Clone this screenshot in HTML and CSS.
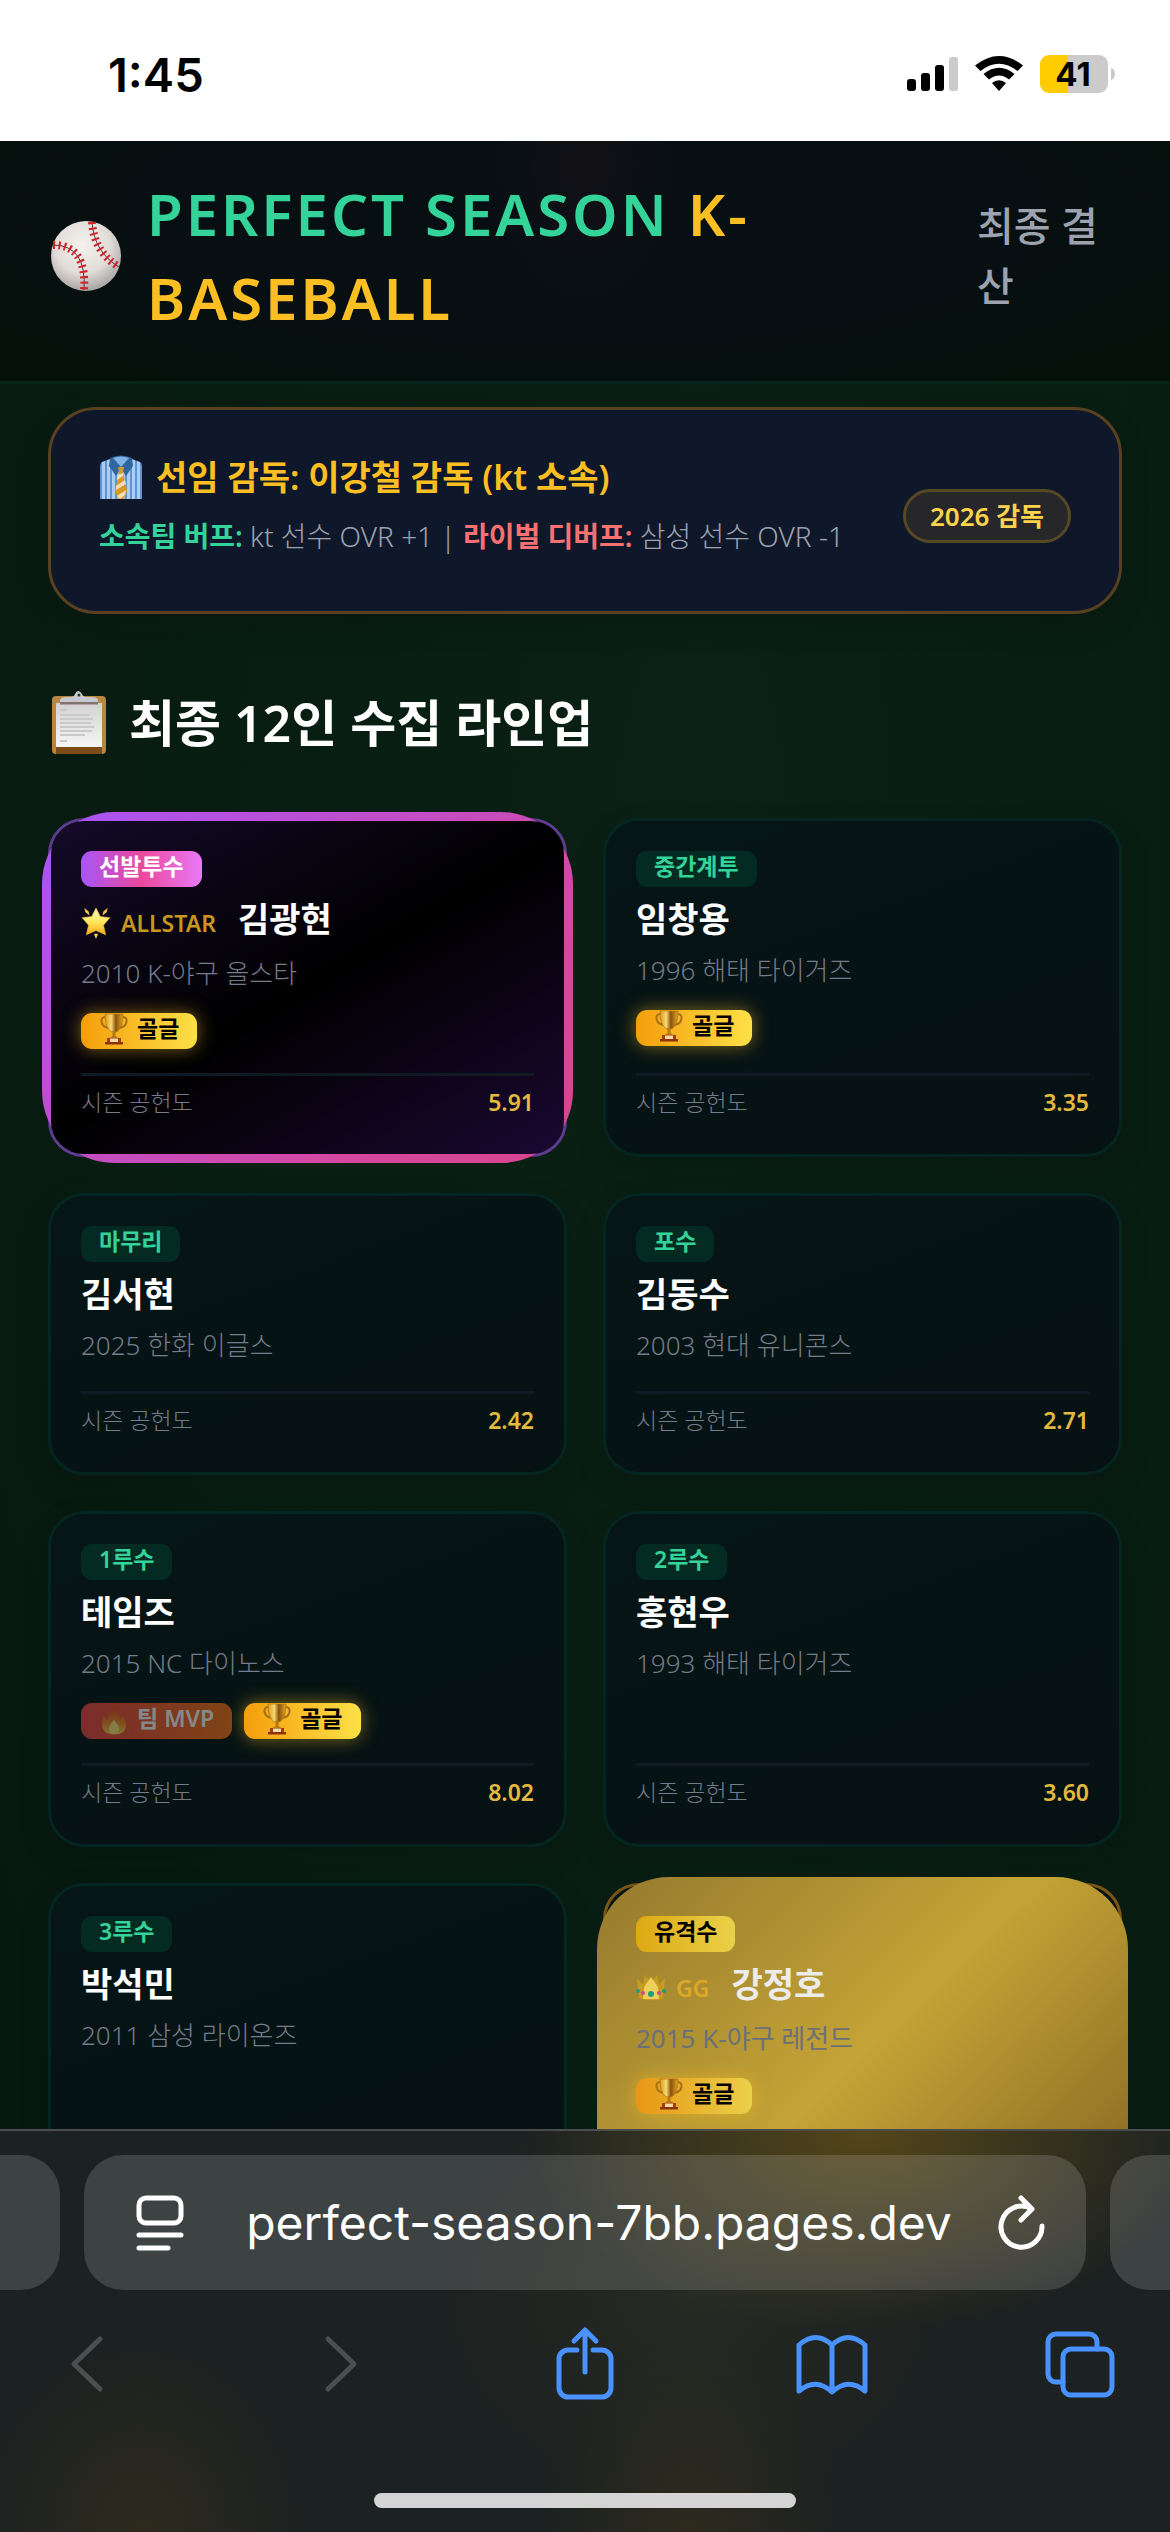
FILE: index.html
```html
<!DOCTYPE html>
<html lang="ko">
<head>
<meta charset="utf-8">
<meta name="viewport" content="width=device-width, initial-scale=1">
<title>PERFECT SEASON K-BASEBALL</title>
<link rel="stylesheet" href="styles.css">
</head>
<body>
<svg class="defs" aria-hidden="true">
  <defs>
    <linearGradient id="gold" x1="0" x2="1" y1="0" y2="0">
      <stop offset="0" stop-color="#d99a1c"/><stop offset=".35" stop-color="#f7d774"/><stop offset=".6" stop-color="#8a5208"/><stop offset="1" stop-color="#e0a62a"/>
    </linearGradient>
    <radialGradient id="ball" cx=".45" cy=".35" r=".65">
      <stop offset="0" stop-color="#f4f2ee"/><stop offset=".6" stop-color="#e2ddd8"/><stop offset="1" stop-color="#a9a6a6"/>
    </radialGradient>
    <linearGradient id="star" x1="0" x2="0" y1="0" y2="1">
      <stop offset="0" stop-color="#fff6c8"/><stop offset=".5" stop-color="#ffe95c"/><stop offset="1" stop-color="#f5a916"/>
    </linearGradient>
    <linearGradient id="fire" x1="0" x2="0" y1="0" y2="1">
      <stop offset="0" stop-color="#f0442a"/><stop offset=".6" stop-color="#fb8b24"/><stop offset="1" stop-color="#ffd84a"/>
    </linearGradient>
    <linearGradient id="paper" x1="0" x2="0" y1="0" y2="1">
      <stop offset="0" stop-color="#d2d2d2"/><stop offset="1" stop-color="#f6f6f6"/>
    </linearGradient>
    <pattern id="stripe" width="5" height="10" patternUnits="userSpaceOnUse">
      <rect width="5" height="10" fill="#a9cdf3"/><rect width="2" height="10" fill="#5f93d2"/>
    </pattern>
    <symbol id="trophy" viewBox="0 0 30 32">
      <path d="M7 4C0 3 1 14 10 15M23 4c7-1 6 10-3 11" fill="none" stroke="#a8700f" stroke-width="2"/>
      <path d="M6 1h18c0 9-2 16-7 18h-4C8 17 6 10 6 1z" fill="url(#gold)" stroke="#a56a0c" stroke-width=".6"/>
      <path d="M13.500 18h3v5l3 2h-9l3-2z" fill="#b9780f"/>
      <path d="M8 25h14v5H8z" fill="#a23f12"/><path d="M11 25.500h8v3.500h-8z" fill="#f3d9a4"/><path d="M6 29h18v2.500H6z" fill="#8c330d"/>
    </symbol>
  </defs>
</svg>

<div class="status-bar">
  <time class="clock">1:45</time>
  <svg class="status-icons" viewBox="0 0 210 40" role="img" aria-label="신호, 와이파이, 배터리">
    <rect x="1" y="24" width="9" height="12" rx="3"/><rect x="15" y="18" width="9" height="18" rx="3"/><rect x="29" y="10" width="9" height="26" rx="3"/><rect x="43" y="2" width="9" height="34" rx="3" fill="#cbcbcb"/>
    <path d="M69 10.500Q93-8.500 117 10.500L111.500 16Q93 1.500 74.500 16zM77.500 19Q93 6.500 108.500 19L103 24.500Q93 16.500 83 24.500zM86 28Q93 22.500 100 28L93 36z"/>
    <path d="M143 0h19v38h-19a9 9 0 0 1-9-9V9a9 9 0 0 1 9-9z" fill="#ffcc00"/><path d="M162 0h31a9 9 0 0 1 9 9v20a9 9 0 0 1-9 9h-31z" fill="#cbcbcb"/>
    <path d="M205 13q4 1 4 6t-4 6z" fill="#cbcbcb"/>
    <text x="167" y="31" text-anchor="middle" class="battery-text">41</text>
  </svg>
</div>

<header class="site-header">
  <svg class="logo" viewBox="0 0 70 70" aria-hidden="true">
    <circle cx="35" cy="35" r="35" fill="url(#ball)"/>
    <path d="M2 24Q36 24 33 69M41 1q2 30 27 45" fill="none" stroke="#4b3b38" stroke-width="1"/>
    <path d="M2 24Q36 24 33 69M41 1q2 30 27 45" fill="none" stroke="#d3202b" stroke-width="8" stroke-dasharray="2 3.500"/>
  </svg>
  <h1 class="title">PERFECT SEASON <span class="title-league">K-BASEBALL</span></h1>
  <a class="nav-link" href="#lineup">최종 결산</a>
</header>

<main class="content">
  <section class="manager">
    <div class="manager-text">
      <h2 class="manager-name">
        <svg class="shirt" viewBox="0 0 42 44" aria-hidden="true">
          <path d="M2 7l8-3h22l8 3q2 1 2 5v32H0V12q0-4 2-5z" fill="url(#stripe)"/>
          <path d="M10 3q11-5 22 0l1 8-7 10-5-8-5 8-7-10z" fill="#2f669f"/><path d="M13 3q8-3 16 0l-8 9z" fill="#7db3e6"/>
          <path d="M18 12h6l-1 5 4 19-3 8h-6l-3-8 4-19z" fill="#d99a21"/><path d="M18 20l5-2v3l-6 4zM16 31l9-6 1 4-10 6zM17 41l9-6-1 5-5 4z" fill="#f0dfc0"/>
        </svg>
        <span>선임 감독: 이강철 감독 (kt 소속)</span>
      </h2>
      <p class="manager-effects"><strong class="buff">소속팀 버프:</strong> kt 선수 OVR +1 | <strong class="debuff">라이벌 디버프:</strong> 삼성 선수 OVR -1</p>
    </div>
    <span class="manager-badge">2026 감독</span>
  </section>

  <h2 class="section-title" id="lineup">
    <svg class="clipboard" viewBox="0 0 56 64" aria-hidden="true">
      <rect x="1" y="5" width="54" height="58" rx="4" fill="#b9853f"/><path d="M5 56h46v7H5z" fill="#7c4c17"/>
      <path d="M5 12h46v44H5z" fill="url(#paper)"/>
      <path d="M9 19h7M9 24h30M9 28h33M9 32h31M9 36h34M9 40h32M9 44h25M9 50h7" stroke="#c9c9c9" stroke-width="2"/>
      <path d="M9 13V9q1-3 6-3h5q3 0 4-3 3-6 7 0 1 3 4 3h6q5 0 6 3v4z" fill="#c5c9cf"/><path d="M9 11h38v2.500H9z" fill="#83746d"/><circle cx="28" cy="4" r="1.500" fill="#333"/>
    </svg>
    <span>최종 12인 수집 라인업</span>
  </h2>

  <ul class="lineup">
    <li class="card card-allstar">
      <span class="position">선발투수</span>
      <h3 class="player"><span class="rank"><svg class="emoji" viewBox="0 0 28 30" aria-hidden="true"><path d="M14 1l4 8 9 1-6 7 2 9-9-4-9 4 2-9-6-7 9-1z" fill="url(#star)" stroke="#f5b83a" stroke-width=".6"/><path d="M3 1l4 3 1 4-4-3zM25 1l-4 3-1 4 4-3zM12 25h4l-2 5z" fill="#f6c744"/></svg>ALLSTAR</span>김광현</h3>
      <p class="team">2010 K-야구 올스타</p>
      <div class="awards"><span class="award award-gold"><svg class="emoji" aria-hidden="true"><use href="#trophy"/></svg>골글</span></div>
      <dl class="score"><dt>시즌 공헌도</dt><dd>5.91</dd></dl>
    </li>
    <li class="card">
      <span class="position">중간계투</span>
      <h3 class="player">임창용</h3>
      <p class="team">1996 해태 타이거즈</p>
      <div class="awards"><span class="award award-gold"><svg class="emoji" aria-hidden="true"><use href="#trophy"/></svg>골글</span></div>
      <dl class="score"><dt>시즌 공헌도</dt><dd>3.35</dd></dl>
    </li>
    <li class="card">
      <span class="position">마무리</span>
      <h3 class="player">김서현</h3>
      <p class="team">2025 한화 이글스</p>
      <dl class="score"><dt>시즌 공헌도</dt><dd>2.42</dd></dl>
    </li>
    <li class="card">
      <span class="position">포수</span>
      <h3 class="player">김동수</h3>
      <p class="team">2003 현대 유니콘스</p>
      <dl class="score"><dt>시즌 공헌도</dt><dd>2.71</dd></dl>
    </li>
    <li class="card">
      <span class="position">1루수</span>
      <h3 class="player">테임즈</h3>
      <p class="team">2015 NC 다이노스</p>
      <div class="awards">
        <span class="award award-mvp"><svg class="emoji" viewBox="0 0 30 32" aria-hidden="true"><path d="M13 4q8 4 8 12 2-1 2-4 4 5 4 10 0 9-12 9.500Q3 31 3 21q0-7 3-9 0 4 3 5-1-8 4-13z" fill="url(#fire)"/><path d="M15 17q5 5 5 9 0 5-5 5t-5-5q0-4 5-9z" fill="#ffe477"/></svg>팀 MVP</span>
        <span class="award award-gold"><svg class="emoji" aria-hidden="true"><use href="#trophy"/></svg>골글</span>
      </div>
      <dl class="score"><dt>시즌 공헌도</dt><dd>8.02</dd></dl>
    </li>
    <li class="card">
      <span class="position">2루수</span>
      <h3 class="player">홍현우</h3>
      <p class="team">1993 해태 타이거즈</p>
      <dl class="score"><dt>시즌 공헌도</dt><dd>3.60</dd></dl>
    </li>
    <li class="card card-tall">
      <span class="position">3루수</span>
      <h3 class="player">박석민</h3>
      <p class="team">2011 삼성 라이온즈</p>
    </li>
    <li class="card card-tall card-legend">
      <span class="position">유격수</span>
      <h3 class="player"><span class="rank"><svg class="emoji" viewBox="0 0 30 28" aria-hidden="true"><path d="M1 4l6 7 2-10 6 8 6-8 2 10 6-7-2 20q-12 5-24 0z" fill="#c99a20"/><path d="M8 13l7-10 7 10 1 12H7z" fill="#ecd05a"/><circle cx="15" cy="20" r="3" fill="#1f9d80"/><circle cx="7" cy="19" r="2" fill="#cb4b9a"/><circle cx="23" cy="19" r="2" fill="#cb4b9a"/><circle cx="2" cy="17" r="2" fill="#1f9d80"/><circle cx="28" cy="17" r="2" fill="#1f9d80"/></svg>GG</span>강정호</h3>
      <p class="team">2015 K-야구 레전드</p>
      <div class="awards"><span class="award award-gold"><svg class="emoji" aria-hidden="true"><use href="#trophy"/></svg>골글</span></div>
    </li>
  </ul>
</main>

<footer class="browser">
  <div class="tabs">
    <div class="tab tab-prev"></div>
    <div class="tab tab-current">
      <button class="icon-button" type="button" aria-label="페이지 메뉴"><svg viewBox="0 0 48 56"><rect x="3" y="3" width="42" height="25" rx="7"/><path d="M3 40h42M3 53h29"/></svg></button>
      <input class="address" type="text" value="perfect-season-7bb.pages.dev" aria-label="주소">
      <button class="icon-button" type="button" aria-label="새로 고침"><svg viewBox="0 0 48 56"><path d="M44 31a20.500 20.500 0 1 1-11-17.500M23 3l11 11-11 11"/></svg></button>
    </div>
    <div class="tab tab-next"></div>
  </div>
  <nav class="toolbar">
    <button class="tool tool-off" type="button" aria-label="뒤로"><svg viewBox="0 0 90 80"><path d="M59 15L33 40l26 25"/></svg></button>
    <button class="tool tool-off" type="button" aria-label="앞으로"><svg viewBox="0 0 90 80"><path d="M38 15l26 25-26 25"/></svg></button>
    <button class="tool" type="button" aria-label="공유"><svg viewBox="0 0 90 80"><path d="M39 26H30a9 9 0 0 0-9 9v29a9 9 0 0 0 9 9h34a9 9 0 0 0 9-9V35a9 9 0 0 0-9-9h-9M47 48V6M36 17L47 6l11 11"/></svg></button>
    <button class="tool" type="button" aria-label="책갈피"><svg viewBox="0 0 90 80"><path d="M45 21Q29 6 12 21v46q17-14 33 1 16-15 33-1V21Q61 6 45 21zV67"/></svg></button>
    <button class="tool" type="button" aria-label="탭"><svg viewBox="0 0 90 80"><rect x="28" y="25" width="49" height="46" rx="8"/><path d="M28 58H21a8 8 0 0 1-8-8V18a8 8 0 0 1 8-8h33a8 8 0 0 1 8 8v7"/></svg></button>
  </nav>
  <div class="home-indicator"></div>
</footer>
</body>
</html>
```
FILE: styles.css
```css
* { box-sizing: border-box; }

body {
  display: flex;
  flex-direction: column;
  height: 100vh;
  margin: 0;
  overflow: hidden;
  background: radial-gradient(ellipse at 60% 32%, #0a2115, #081c12 60%, #06160d);
  color: #fff;
  font-family: "Noto Sans", "Noto Sans CJK KR", sans-serif;
}

h1, h2, h3, p, ul, dl, dd { margin: 0; padding: 0; }
button { padding: 0; border: 0; background: none; }
svg { display: block; }
.defs { position: absolute; width: 0; height: 0; }

/* Status bar */
.status-bar {
  display: flex;
  flex: none;
  align-items: center;
  justify-content: space-between;
  height: 141px;
  padding: 8px 54px 0 108px;
  background: #fff;
  color: #000;
  font-family: Inter, sans-serif;
}
.clock { font-size: 47px; font-weight: 600; line-height: 54px; }
.status-icons { width: 210px; height: 40px; }
.battery-text { font-size: 33px; font-weight: 700; }

/* Header */
.site-header {
  display: flex;
  flex: none;
  align-items: center;
  gap: 26px;
  padding: 31px 48px 41px 51px;
  border-bottom: 3px solid #08231a;
  background: radial-gradient(ellipse 8% 60% at 50% 10%, #121116, transparent), radial-gradient(ellipse at 50% 30%, #080f13 50%, #04110a 90%);
}
.logo { flex: none; width: 70px; height: 70px; }
.title {
  flex: 1;
  color: #34d399;
  font-size: 58px;
  font-weight: 600;
  letter-spacing: 3px;
  line-height: 84px;
}
.title-league { color: #fbbf24; }
.nav-link {
  flex: none;
  width: 145px;
  color: #9ca3af;
  font-size: 40px;
  font-weight: 500;
  line-height: 60px;
  text-decoration: none;
}

/* Page content */
.content { flex: 1; min-height: 0; padding: 23px 48px 0; overflow: hidden; }
.manager {
  display: flex;
  align-items: center;
  justify-content: space-between;
  padding: 40px 48px 54px;
  border: 3px solid #59401f;
  border-radius: 48px;
  background: #0f172a;
  box-shadow: 0 12px 30px rgba(0, 0, 0, .15);
}
.manager-name {
  display: flex;
  align-items: center;
  gap: 13px;
  margin-bottom: 12px;
  color: #fbbf24;
  font-size: 34px;
  font-weight: 600;
  line-height: 54px;
}
.shirt { width: 44px; height: 44px; }
.manager-effects { color: #9ca3af; font-size: 28px; font-weight: 300; line-height: 41px; }
.manager-effects strong { font-weight: 600; }
.buff { color: #34d399; }
.manager-effects .debuff { color: #f87171; }
.manager-badge {
  flex: none;
  margin-top: 24px;
  padding: 0 24px;
  border: 3px solid #574824;
  border-radius: 27px;
  background: #27272a;
  color: #fcd34d;
  font-size: 26px;
  font-weight: 600;
  line-height: 48px;
}
.section-title {
  display: flex;
  align-items: center;
  gap: 22px;
  margin: 72px 3px 58px;
  font-size: 50px;
  font-weight: 600;
  line-height: 74px;
}
.clipboard { width: 56px; height: 64px; }

/* Player cards */
.lineup {
  display: grid;
  grid-template-columns: 1fr 1fr;
  gap: 36px;
  list-style: none;
}
.card {
  position: relative;
  display: flex;
  flex-direction: column;
  padding: 30px;
  border: 3px solid #052520;
  border-radius: 36px;
  background: linear-gradient(160deg, #061516, #061112);
  box-shadow: 0 12px 30px rgba(0, 0, 0, .15);
}
.card-tall { min-height: 339px; }
.position {
  align-self: flex-start;
  height: 36px;
  padding: 0 18px;
  border-radius: 11px;
  background: #032b22;
  color: #34d399;
  font-size: 23px;
  font-weight: 600;
  line-height: 30px;
}
.player {
  display: flex;
  align-items: center;
  gap: 22px;
  margin: 6px 0;
  font-size: 34px;
  font-weight: 600;
  line-height: 52px;
}
.rank {
  display: flex;
  align-items: center;
  gap: 10px;
  padding-top: 8px;
  color: #c8961e;
  font-size: 23px;
  line-height: 32px;
}
.team { color: #747b8a; font-size: 26px; font-weight: 300; line-height: 39px; }
.team:has(+ .score) { margin-bottom: 26px; }
.awards { display: flex; gap: 12px; margin: 20px 0 24px; }
.award {
  display: flex;
  gap: 8px;
  height: 36px;
  padding: 0 18px;
  border-radius: 11px;
  font-size: 23px;
  font-weight: 600;
  line-height: 30px;
}
.award-gold {
  background: linear-gradient(90deg, #f59e0b, #fde047);
  box-shadow: 0 0 18px rgba(251, 191, 36, .5);
  color: #000;
}
.award-mvp { background: linear-gradient(90deg, #ef4444, #f97316); opacity: .5; }
.emoji { flex: none; width: 30px; height: 32px; }
.score {
  display: flex;
  justify-content: space-between;
  margin-top: auto;
  padding: 7px 0 2px;
  border-top: 3px solid #101a22;
  color: #747b8a;
  font-size: 23px;
  font-weight: 300;
  line-height: 39px;
}
.score dd { color: #e3b93f; font-weight: 600; }

/* Cards with a rank glow behind them */
.card-allstar, .card-legend { isolation: isolate; background-clip: padding-box; box-shadow: none; }
.card-allstar .player, .card-legend .player { margin-bottom: 9px; }
.card-allstar { border-color: #5f3b8f; background: none; }
.card-allstar::before, .card-allstar::after, .card-legend::before {
  content: "";
  position: absolute;
  z-index: -1;
}
.card-allstar::before {
  inset: -9px;
  z-index: -2;
  border-radius: 72px;
  background: linear-gradient(135deg, #a855f7, #d6489f 75%, #d6458b);
}
.card-allstar::after {
  inset: 0;
  border-radius: 33px;
  background: linear-gradient(150deg, #150b2a, #000 50%, #1b0832);
}
.card-allstar .position { background: linear-gradient(90deg, #a855f7, #ec4899 50%, #e879f9); color: #fff; }
.card-legend { border-color: #7b5512; background-color: #120d08; }
.card-legend::before {
  inset: -9px;
  border-radius: 72px;
  background: linear-gradient(135deg, #967a2e, #c4a436 50%, #836521);
}
.card-legend .position { background: linear-gradient(90deg, #dca911, #ebd04a); color: #000; }
.card-legend .player { color: #ececec; }
.card-legend .rank { color: #dca828; }
.card-legend .team { color: #6c7078; font-weight: 400; }
.card-legend .award-gold { background: linear-gradient(90deg, #e79714, #ebd04a); }

/* Browser chrome */
.browser {
  flex: none;
  border-top: 2px solid #4b4c4d;
  background:
    radial-gradient(ellipse 340px 200px at 74% 0, #54461a, transparent),
    radial-gradient(ellipse 160px 190px at 12% 100%, #2e2b1e, transparent),
    radial-gradient(ellipse 150px 190px at 59% 100%, #2e2b1e, transparent),
    radial-gradient(ellipse 260px 220px at 59% 40%, #262a23, transparent),
    #1c2121;
}
.tabs { display: flex; gap: 24px; padding-top: 24px; }
.tab { height: 135px; background: rgba(255, 255, 255, .15); }
.tab-prev { width: 60px; border-radius: 0 39px 39px 0; }
.tab-next { width: 60px; border-radius: 39px 0 0 39px; }
.tab-current {
  display: flex;
  flex: 1;
  align-items: center;
  padding: 0 40px 0 52px;
  border-radius: 39px;
}
.icon-button { flex: none; }
.icon-button svg {
  width: 48px;
  height: 56px;
  fill: none;
  stroke: #fff;
  stroke-linecap: round;
  stroke-linejoin: round;
  stroke-width: 5px;
}
.address {
  flex: 1;
  min-width: 0;
  height: 70px;
  padding: 0 0 0 16px;
  border: 0;
  background: none;
  color: #fff;
  font: 400 48px/70px Inter, sans-serif;
  text-align: center;
}
.toolbar { display: flex; justify-content: space-between; padding: 34px 45px 0 41px; }
.tool svg {
  width: 90px;
  height: 80px;
  fill: none;
  stroke: #4a92ff;
  stroke-linecap: round;
  stroke-linejoin: round;
  stroke-width: 5px;
}
.tool-off svg { stroke: #4c4f4f; }
.home-indicator {
  width: 36%;
  height: 15px;
  margin: 89px auto 24px;
  border-radius: 8px;
  background: #d4d4d4;
}
```
